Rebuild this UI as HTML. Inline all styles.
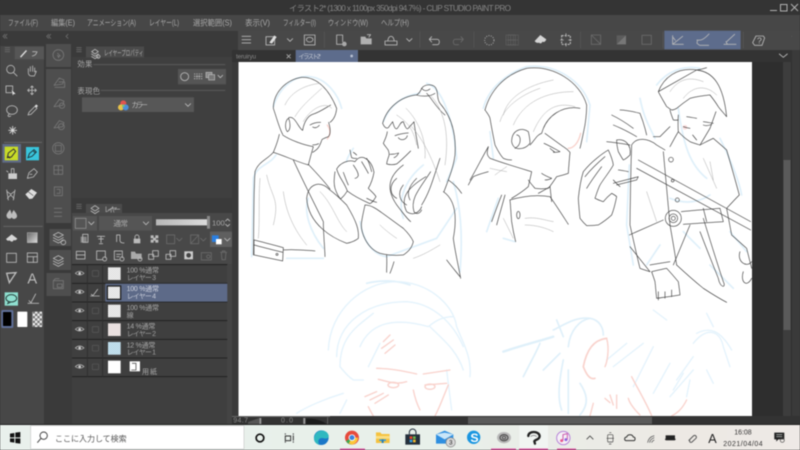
<!DOCTYPE html>
<html lang="ja"><head><meta charset="utf-8"><title>CLIP STUDIO PAINT</title>
<style>
html,body{margin:0;padding:0;background:#333;width:800px;height:450px;overflow:hidden}
svg{display:block;filter:blur(.4px)}
text{font-family:"Liberation Sans","Noto Sans CJK JP",sans-serif}
.m{font-size:8px;fill:#a8a8a8}
.i{fill:none;stroke:#b8b8b8;stroke-width:2.6;stroke-linecap:round;stroke-linejoin:round}
.d{fill:none;stroke:#6a6a6a;stroke-width:2.6;stroke-linecap:round;stroke-linejoin:round}
.s{fill:none;stroke:#767676;stroke-width:2.6;stroke-linejoin:round}
.k{fill:none;stroke:#3a3a3a;stroke-width:1.9;stroke-linecap:round;stroke-linejoin:round}
.g{fill:none;stroke:#a8a8a8;stroke-width:1.4;stroke-linecap:round;stroke-linejoin:round}
.b{fill:none;stroke:#dff0fa;stroke-width:5;stroke-linecap:round;stroke-linejoin:round}
.b2{fill:none;stroke:#e4f3fc;stroke-width:4;stroke-linecap:round;stroke-linejoin:round}
.r{fill:none;stroke:#f9d2cc;stroke-width:4;stroke-linecap:round;stroke-linejoin:round}
</style></head><body>
<svg width="800" height="450" viewBox="0 0 800 450" xmlns="http://www.w3.org/2000/svg">
<defs>
<pattern id="ck" width="6" height="6" patternUnits="userSpaceOnUse"><rect width="6" height="6" fill="#f6f6f6"/><rect width="3" height="3" fill="#d8d8d8"/><rect x="3" y="3" width="3" height="3" fill="#d8d8d8"/></pattern>
<pattern id="ck2" width="4" height="4" patternUnits="userSpaceOnUse"><rect width="4" height="4" fill="#ededed"/><rect width="2" height="2" fill="#888"/><rect x="2" y="2" width="2" height="2" fill="#888"/></pattern>
<pattern id="ck3" width="14" height="14" patternUnits="userSpaceOnUse"><rect width="14" height="14" fill="#ededed"/><rect width="7" height="7" fill="#777"/><rect x="7" y="7" width="7" height="7" fill="#777"/></pattern>
<linearGradient id="op" x1="0" x2="1"><stop offset="0" stop-color="#b5b5b5"/><stop offset="1" stop-color="#eee"/></linearGradient>
<linearGradient id="tb" x1="0" x2="1"><stop offset="0" stop-color="#e9f0ec"/><stop offset=".55" stop-color="#e8f0ea"/><stop offset=".85" stop-color="#ede9e4"/><stop offset="1" stop-color="#eee9e6"/></linearGradient>
<linearGradient id="gr" x1="0" y1="0" x2="1" y2="1"><stop offset="0" stop-color="#666"/><stop offset="1" stop-color="#ddd"/></linearGradient>
</defs>
<rect width="800" height="450" fill="#333"/>
<rect y="0" width="800" height="15" fill="#343434"/>
<rect y="15" width="800" height="16" fill="#474747"/>
<rect y="31" width="800" height="19" fill="#484848"/>
<rect y="31" width="238" height="393" fill="#3a3a3a"/>
<rect y="50" x="232" width="568" height="12" fill="#333"/>
<text x="289" y="11" font-size="8.2" fill="#868686" textLength="222">イラスト2* (1300 x 1100px 350dpi 94.7%)  - CLIP STUDIO PAINT PRO</text>
<g stroke="#b0b0b0" fill="none" stroke-width="1"><path d="M770 10.5h7"/><rect x="780.5" y="4.5" width="6.5" height="6.5"/><path d="M791 4l7 7M798 4l-7 7"/></g>
<text class="m" x="8" y="25.5" textLength="30" lengthAdjust="spacingAndGlyphs">ファイル(F)</text>
<text class="m" x="51" y="25.5" textLength="24" lengthAdjust="spacingAndGlyphs">編集(E)</text>
<text class="m" x="87" y="25.5" textLength="49" lengthAdjust="spacingAndGlyphs">アニメーション(A)</text>
<text class="m" x="149" y="25.5" textLength="30" lengthAdjust="spacingAndGlyphs">レイヤー(L)</text>
<text class="m" x="193" y="25.5" textLength="39" lengthAdjust="spacingAndGlyphs">選択範囲(S)</text>
<text class="m" x="245" y="25.5" textLength="25" lengthAdjust="spacingAndGlyphs">表示(V)</text>
<text class="m" x="283" y="25.5" textLength="33" lengthAdjust="spacingAndGlyphs">フィルター(I)</text>
<text class="m" x="328" y="25.5" textLength="40" lengthAdjust="spacingAndGlyphs">ウィンドウ(W)</text>
<text class="m" x="381" y="25.5" textLength="28" lengthAdjust="spacingAndGlyphs">ヘルプ(H)</text>
<rect x="0" y="46" width="44" height="378" fill="#474747"/>
<rect x="0" y="31" width="44" height="15" fill="#3a3a3a"/>
<rect x="14.7" y="46.7" width="29.3" height="12.6" fill="#565656"/>
<rect x="46" y="31" width="25" height="393" fill="#3a3a3a"/>
<rect x="46" y="44" width="25" height="23" fill="#4e4e4e"/>
<rect x="46" y="69" width="25" height="154" fill="#4e4e4e"/>
<rect x="49.5" y="229" width="21.5" height="17" fill="#4e4e4e"/>
<rect x="49.5" y="250" width="21.5" height="20" fill="#4e4e4e"/>
<rect x="46.5" y="273" width="24.5" height="23" fill="#4e4e4e"/>
<rect x="72" y="57" width="160" height="141" fill="#3f3f3f"/>
<rect x="86" y="46.5" width="58" height="11" fill="#4b4b4b"/>
<rect x="72" y="198" width="160" height="15" fill="#3a3a3a"/>
<rect x="86" y="204" width="36" height="9" fill="#4b4b4b"/>
<rect x="72" y="213" width="160" height="51" fill="#484848"/>
<rect x="72" y="264" width="160" height="160" fill="#3f3f3f"/>
<rect x="227" y="264" width="5" height="160" fill="#444"/>

<g transform="scale(.3333)">
<path d="M15 103l-6 6 6 6M21 103l-6 6 6 6" class="d" stroke-width="2"/>
<path d="M146 103l-6 6 6 6M152 103l-6 6 6 6M204 103l-6 6 6 6" class="d" stroke-width="2"/>
<path d="M15 143h14M15 149h14M15 155h14M230 143h14M230 149h14M230 155h14" class="d" stroke-width="2"/>
<path d="M60 170l18-20 3 3-18 20z" fill="#ddd"/>
<path d="M98 155h10M97 168c8-1 12-5 14-13" class="i" stroke-width="2.5"/>
<text x="312" y="166" font-size="22" fill="#b0b0b0" textLength="118" lengthAdjust="spacingAndGlyphs">レイヤープロパティ</text>
<path d="M275 155l10-7 10 7-10 7zM275 162l10 7 10-7M275 170l10 6 10-6" class="i" stroke-width="2.2"/><circle cx="295" cy="170" r="5" class="i" stroke-width="2"/>
<circle cx="32" cy="208" r="12" class="i"/><path d="M41 218l10 10" class="i"/>
<path d="M85 218v-12M91 214v-14M98 214v-16M104 216v-12M85 220c2 6 5 8 10 8h8l6-14-5 0" class="i" stroke="#ccc" fill="#bbb"/>
<rect x="18" y="258" width="20" height="20" class="i"/><path d="M34 268l14 14-7 1-3 5z" fill="#ddd" stroke="#333"/>
<path d="M96 258v26M83 271h26M96 258l-4 4M96 258l4 4M96 284l-4-4M96 284l4-4M83 271l4-4M83 271l4 4M109 271l-4-4M109 271l-4 4" class="i"/>
<ellipse cx="36" cy="330" rx="16" ry="13" class="i"/><path d="M28 342c-8 6-2 10 4 6" class="i"/>
<path d="M84 345l3-8 18-18 6 6-18 18z" class="i"/><path d="M104 318l5-5 5 5-5 5z" fill="#ddd"/>
<path d="M38 378v26M25 391h26M29 382l18 18M47 382l-18 18" stroke="#c8c8c8" stroke-width="3"/><circle cx="38" cy="391" r="4" fill="#ddd"/>
<circle cx="175" cy="165" r="16" class="s"/><path d="M172 159l9 9h-4l-1 5-4-8" class="s"/>
<path d="M162 256l16-22 14 6-4 12zM176 246h18v16h-30" class="s"/>
<path d="M162 320l16-22 14 6-4 12z" class="s"/><circle cx="186" cy="317" r="8" class="s"/>
<path d="M162 384l16-22 14 6-4 12z" class="s"/><circle cx="184" cy="380" r="9" class="s"/>
<text x="232" y="200" font-size="22" fill="#a8a8a8" textLength="45">効果</text>
<path d="M280 194H676" stroke="#5a5a5a" stroke-width="3"/>
<rect x="534" y="207" width="144" height="46" fill="#555"/>
<circle cx="554" cy="230" r="12" class="i" stroke="#b5b5b5"/>
<g fill="#aaa"><circle cx="584" cy="222" r="2"/><circle cx="591" cy="222" r="2"/><circle cx="598" cy="222" r="2"/><circle cx="605" cy="222" r="2"/><circle cx="584" cy="229" r="2"/><circle cx="591" cy="229" r="3"/><circle cx="598" cy="229" r="3"/><circle cx="605" cy="229" r="2"/><circle cx="584" cy="236" r="2"/><circle cx="591" cy="236" r="2"/><circle cx="598" cy="236" r="2"/><circle cx="605" cy="236" r="2"/></g>
<rect x="618" y="217" width="18" height="16" fill="#888" stroke="#bbb" stroke-width="2"/><rect x="626" y="224" width="18" height="16" fill="#777" stroke="#bbb" stroke-width="2"/>
<path d="M654 226l7 7 7-7" class="i" stroke="#ccc"/>
<text x="232" y="281" font-size="22" fill="#a8a8a8" textLength="68">表現色</text>
<path d="M302 271H676" stroke="#5a5a5a" stroke-width="3"/>
<rect x="246" y="292" width="336" height="44" fill="#575757"/>
<circle cx="370" cy="310" r="9" fill="#e2534f"/><circle cx="363" cy="322" r="9" fill="#e8c24a"/><circle cx="377" cy="322" r="9" fill="#4d8fd8"/><circle cx="370" cy="317" r="4" fill="#7bc07a"/>
<text x="394" y="323" font-size="22" fill="#b8b8b8" textLength="50">カラー</text>
<path d="M556 311l8 8 8-8" class="i" stroke="#ccc"/>
</g>

<g transform="translate(0,135) scale(.3333)">
<path d="M12 22h114" stroke="#666" stroke-width="3"/>
<rect x="7" y="27" width="56" height="56" fill="#5f6b86"/>
<rect x="14" y="35" width="40" height="41" fill="#c8dc27"/>
<path d="M22 68l3-14 16-12 6 7-13 17zM25 64l5 6" fill="none" stroke="#333" stroke-width="3"/>
<rect x="78" y="36" width="39" height="40" fill="#39c5dc"/>
<path d="M84 68l4-12 14-12 7 7-13 13zM100 48l6 6" fill="none" stroke="#1f3d44" stroke-width="3"/>
<rect x="25" y="115" width="26" height="17" fill="#ccc"/><path d="M34 115v-14h8v14M20 108l4 3" class="i"/>
<path d="M82 130l5-17 15-12 10 10-12 15zM90 118l6 0" class="i"/>
<path d="M22 170l10 8 10-8M22 190l10-10 10 10M20 165l5 30M45 165l-5 30" class="i" stroke="#ddd"/>
<path d="M76 178l18-16 17 11-14 18-9 1z" fill="#ddd"/><path d="M84 170l16 12" stroke="#555" stroke-width="2"/>
<path d="M30 224c-8 10-12 14-10 21 3 8 12 8 15 2 3 7 14 6 16-2 1-7-4-12-10-20-3 5-6 10-6 13-1-4-2-9-5-14z" fill="#bdbdbd"/>
<path d="M10 274h118" stroke="#666" stroke-width="3"/>
<path d="M18 312l17-14 17 13c-4 6-9 6-11 4-2 5-5 5-7 5l-6-4c-3 2-6 2-10-4z" fill="#d6d6d6"/>
<rect x="82" y="293" width="30" height="30" fill="url(#gr)" stroke="#bbb" stroke-width="1.5"/>
<rect x="20" y="355" width="29" height="27" class="i"/>
<rect x="82" y="354" width="30" height="28" class="i"/><path d="M82 365h30M100 365v17" class="i"/>
<circle cx="175" cy="40" r="17" class="s"/><rect x="166" y="31" width="18" height="18" class="s"/>
<path d="M162 92h26v26h-26zM175 92v26M162 105h26" class="s"/>
<rect x="163" y="156" width="24" height="26" class="s"/><path d="M170 163h10v12h-10" class="s"/>
<path d="M162 220h24M162 232h24M162 244h24" class="s"/>
<path d="M160 300l15-8 15 8-15 8zM160 308l15 8 15-8M160 316l15 8 15-8" class="i" stroke="#a0a0a0"/><circle cx="190" cy="322" r="7" class="i" stroke="#a0a0a0" stroke-width="2"/>
<path d="M160 370l15-8 15 8-15 8zM160 378l15 8 15-8M160 386l15 8 15-8" class="i" stroke="#a0a0a0"/>
<path d="M230 208h14M230 214h14M230 220h14" class="d" stroke-width="2"/>
<path d="M273 220l12-8 12 8-12 8zM273 228l12 8 12-8" class="i" stroke-width="2.2"/>
<text x="312" y="231" font-size="22" fill="#b0b0b0" textLength="50">レイヤー</text>
<rect x="219" y="243" width="72" height="44" fill="#555"/><rect x="226" y="250" width="32" height="30" fill="none" stroke="#999" stroke-width="2"/><path d="M266 261l8 8 8-8" class="i"/>
<rect x="297" y="243" width="159" height="44" fill="#555"/><text x="340" y="273" font-size="23" fill="#aaa" textLength="44">通常</text><path d="M430 261l8 8 8-8" class="i"/>
<rect x="468" y="253" width="155" height="18" fill="url(#ck2)"/><rect x="468" y="253" width="155" height="18" fill="url(#op)" opacity=".65"/>
<rect x="621" y="243" width="9" height="38" fill="#8a8a8a"/>
<text x="636" y="272" font-size="23" fill="#a8a8a8">100</text><path d="M677 258l6-6 6 6M677 268l6 6 6-6" class="i" stroke-width="2"/>
<rect x="242" y="305" width="18" height="18" fill="#888"/><rect x="248" y="298" width="16" height="24" class="i"/>
<path d="M292 304h22M303 304v18M296 312h14M298 326h10" class="i"/>
<path d="M350 300h10v16c0 6 4 8 12 8M350 300v20" class="i"/>
<rect x="401" y="311" width="20" height="14" fill="#bbb"/><path d="M405 311v-5a6 6 0 0 1 12 0v5" class="i"/>
<g fill="#bbb"><rect x="452" y="301" width="9" height="9"/><rect x="466" y="301" width="9" height="9"/><rect x="452" y="314" width="9" height="9"/><rect x="466" y="314" width="9" height="9"/><rect x="459" y="308" width="9" height="9"/></g>
<rect x="500" y="300" width="24" height="26" class="d"/><path d="M530 310l8 8 8-8" class="d"/>
<path d="M572 300h24v26h-24zM572 326l24-26" class="d"/><path d="M602 310l8 8 8-8" class="d"/>
<rect x="630" y="290" width="68" height="46" fill="#5f5f5f"/>
<rect x="636" y="301" width="20" height="20" fill="#2b7fe0"/><rect x="648" y="312" width="17" height="16" fill="#fff"/><path d="M674 310l8 8 8-8" class="i"/>
<rect x="229" y="349" width="26" height="23" class="i"/><path d="M229 360h26" class="i"/>
<path d="M290 348h26v20M290 348v26h18" class="i"/><circle cx="314" cy="372" r="6" class="i" stroke-width="2"/>
<path d="M343 348h24v20M343 348v26h14M350 358h12M350 365h8" class="i"/><circle cx="366" cy="372" r="6" class="i" stroke-width="2"/>
<path d="M393 350h12l3 6h17v16h-32z" fill="#aaa"/><circle cx="420" cy="372" r="6" class="i" stroke-width="2"/>
<rect x="446" y="358" width="15" height="15" class="i"/><rect x="458" y="347" width="17" height="17" class="i"/>
<rect x="498" y="358" width="15" height="15" class="i"/><rect x="510" y="347" width="17" height="17" class="i"/>
<rect x="553" y="349" width="26" height="24" fill="#ccc"/><circle cx="566" cy="361" r="7" fill="#444"/>
<rect x="604" y="353" width="30" height="22" class="d"/><circle cx="625" cy="365" r="5" class="d"/>
<path d="M662 352h18M667 352v-4h8v4M664 352l2 22h10l2-22" class="d"/>
</g>

<g transform="translate(0,260) scale(.3333)">
<path d="M20 40l28-2-20 30z" fill="none" stroke="#bbb" stroke-width="4"/>
<text x="82" y="70" font-size="44" fill="#bbb">A</text>
<rect x="14" y="97" width="40" height="40" fill="#8fe0d0"/>
<ellipse cx="34" cy="115" rx="16" ry="11" fill="none" stroke="#27413d" stroke-width="3"/><path d="M26 124l-3 7 8-4" fill="none" stroke="#27413d" stroke-width="2.5"/>
<path d="M84 130h32M92 130l15-28M87 122l8 8" class="i"/>
<rect x="4" y="150" width="36" height="54" rx="4" fill="#5f6f98"/><rect x="9" y="156" width="25" height="42" rx="2" fill="#000"/>
<rect x="52" y="155" width="30" height="46" rx="2" fill="#fff"/>
<rect x="97" y="155" width="30" height="46" rx="2" fill="url(#ck3)"/>
<rect x="160" y="62" width="30" height="24" class="s"/><rect x="172" y="72" width="14" height="10" class="s"/><path d="M160 62l6-6h12" class="s"/>
<path d="M216 14H682M216 70H682M216 126H682M216 182H682M216 238H682M216 294H682M216 350H682" stroke="#222" stroke-width="3"/>
<path d="M262 14V350M308 14V350" stroke="#2e2e2e" stroke-width="2.5"/>
<rect x="316" y="71" width="366" height="54" fill="#5d6a88"/>
<g fill="none" stroke="#c0c0c0" stroke-width="2">
<path d="M226 40q13-12 26 0q-13 10-26 0z"/><path d="M226 96q13-12 26 0q-13 10-26 0z"/><path d="M226 152q13-12 26 0q-13 10-26 0z"/><path d="M226 208q13-12 26 0q-13 10-26 0z"/><path d="M226 264q13-12 26 0q-13 10-26 0z"/><path d="M226 320q13-12 26 0q-13 10-26 0z"/>
</g>
<g fill="#d0d0d0"><circle cx="239" cy="40" r="4"/><circle cx="239" cy="96" r="4"/><circle cx="239" cy="152" r="4"/><circle cx="239" cy="208" r="4"/><circle cx="239" cy="264" r="4"/><circle cx="239" cy="320" r="4"/></g>
<g fill="none" stroke="#565656" stroke-width="2.5"><rect x="277" y="32" width="19" height="17" rx="2"/><rect x="277" y="144" width="19" height="17" rx="2"/><rect x="277" y="200" width="19" height="17" rx="2"/><rect x="277" y="256" width="19" height="17" rx="2"/><rect x="277" y="312" width="19" height="17" rx="2"/></g>
<path d="M272 108h26M278 108l15-20M274 103l6 5" class="i" stroke-width="2.5"/>
<rect x="324" y="22" width="38" height="38" fill="url(#ck)"/>
<rect x="320" y="76" width="44" height="44" fill="#222"/><rect x="324" y="80" width="36" height="36" fill="url(#ck)"/>
<rect x="324" y="134" width="38" height="38" fill="url(#ck)"/>
<rect x="324" y="190" width="38" height="38" fill="url(#ck)"/><rect x="324" y="190" width="38" height="38" fill="#f3c9c4" opacity=".22"/>
<rect x="324" y="246" width="38" height="38" fill="url(#ck)"/><rect x="324" y="246" width="38" height="38" fill="#8fd0f0" opacity=".45"/>
<rect x="324" y="302" width="38" height="38" fill="#fff"/>
<text x="380" y="38" fill="#a8a8a8" font-size="21" textLength="97">100 %通常</text><text x="380" y="60" font-size="21" fill="#9e9e9e" textLength="88">レイヤー 3</text>
<text x="380" y="93" font-size="21" fill="#cfd3de" textLength="97">100 %通常</text><text x="380" y="115" font-size="21" fill="#c6cbd8" textLength="88">レイヤー 4</text>
<text x="380" y="150" font-size="21" fill="#a8a8a8" textLength="97">100 %通常</text><text x="380" y="172" font-size="21" fill="#9e9e9e">線</text>
<text x="380" y="206" font-size="21" fill="#a8a8a8" textLength="86">14 %通常</text><text x="380" y="228" font-size="21" fill="#9e9e9e" textLength="88">レイヤー 2</text>
<text x="380" y="262" font-size="21" fill="#a8a8a8" textLength="86">12 %通常</text><text x="380" y="284" font-size="21" fill="#9e9e9e" textLength="88">レイヤー 1</text>
<text x="426" y="342" font-size="21" fill="#a8a8a8" textLength="45">用紙</text>
<rect x="389" y="304" width="31" height="30" fill="#fff"/><path d="M396 310h12v20h-14" fill="none" stroke="#555" stroke-width="2.5"/>
</g>

<g transform="translate(230,0) scale(.3333)">
<path d="M36 109h26M36 119h26M36 129h26" class="i" stroke-width="3.5"/>
<rect x="108" y="110" width="26" height="25" class="i" stroke="#aaa"/><path d="M118 128l15-22 7 5-14 20z" fill="#ddd"/>
<path d="M172 116l8 8 8-8" class="i" stroke="#aaa"/>
<rect x="223" y="105" width="32" height="30" class="i"/><ellipse cx="239" cy="119" rx="10" ry="7" class="i"/>
<path d="M283 95V143M570 95V143M732 95V143" stroke="#595959" stroke-width="2"/>
<path d="M320 105h18v20M320 105v28h15" class="i"/><circle cx="343" cy="132" r="7" fill="#aaa"/>
<path d="M392 110h14l3 5h16v18h-33z" fill="#b0b0b0"/><path d="M412 104l10 0-5 7" class="i" stroke-width="2"/>
<path d="M465 135v-12h36v12zM473 123c2-7 3-14 10-14s8 7 10 14" class="i"/>
<path d="M530 116l8 8 8-8" class="i"/>
<path d="M598 118h24c8 0 8 16 0 16h-14M598 118l7-8M598 118l7 8" class="i"/>
<path d="M700 118h-24c-8 0-8 16 0 16h10M700 118l-7-8M700 118l-7 8" class="d"/>
<circle cx="778" cy="121" r="14" fill="none" stroke="#aaa" stroke-width="3" stroke-dasharray="3 4"/>
<path d="M835 105h30v30h-30zM835 120h30M850 105v30" class="d" opacity=".55"/>
<text x="18" y="176" font-size="19" fill="#868686" textLength="60">teruiryu</text>
<path d="M170 163l12 12M182 163l-12 12" stroke="#aaa" stroke-width="2.5"/>
<rect x="197" y="150" width="187" height="36" fill="#5d6c8c"/>
<text x="205" y="176" font-size="19" fill="#c0c5d0" textLength="68">イラスト2*</text>
<circle cx="365" cy="168" r="4" fill="#b9c2d3"/>
</g>
<g transform="translate(510,0) scale(.3333)">
<path d="M212 95V145" stroke="#595959" stroke-width="2"/>
<path d="M700 95V145M459 95V145" stroke="#595959" stroke-width="2"/>
<rect x="463" y="92" width="229" height="56" fill="#5d6c8c"/>
<path d="M74 123l17-18 18 13c-4 10-10 8-12 7-2 7-8 6-10 3-5 2-10 0-13-5z" fill="#d4d4d4"/>
<rect x="155" y="107" width="26" height="26" fill="none" stroke="#c4c4c4" stroke-width="3" stroke-dasharray="6 3"/><path d="M168 101v8M152 120h8M176 120h8M168 130v8" class="i" stroke-width="2"/>
<path d="M-12 105h28v30h-28zM-12 120h28M2 105v30" class="d" opacity=".55"/>
<path d="M244 105h28v28h-28zM244 105l28 28" class="d" stroke="#5e5e5e"/>
<rect x="320" y="106" width="28" height="27" fill="#5c5c5c"/><path d="M348 106v27h-28z" fill="#777"/>
<rect x="396" y="106" width="28" height="27" class="d" stroke="#626262"/>
<path d="M488 107v26h32M488 133l30-24M490 113l6 8" class="i" stroke="#bcc5d8"/>
<path d="M561 130c2-8 0-10 0-10 12 3 22-3 36-18M561 130l8 6h27" class="i" stroke="#bcc5d8"/>
<path d="M642 133h36M648 125l4 8M650 125l24-22" class="i" stroke="#bcc5d8"/>
<path d="M738 108h22l4 6-8 22h-22l-6-8z" class="i"/><text x="741" y="130" font-size="26" fill="#bbb">?</text>
<path d="M852 103l-6 6 6 6M860 103l-6 6 6 6" class="d" stroke-width="2"/>
<path d="M808 162l12 10 12-10" class="i" stroke="#ccc"/>
</g>

<rect x="232" y="62" width="560" height="354" fill="#2e2e2e"/>
<rect x="232" y="62" width="6.5" height="362" fill="#3a3a3a"/>
<rect x="238.5" y="62" width="513.5" height="354" fill="#fff"/>
<rect x="783" y="62" width="8" height="354" fill="#3d3d3d"/>
<rect x="783.5" y="160" width="7" height="170" fill="#5a5a5a"/>
<rect x="792" y="31" width="8" height="393" fill="#3a3a3a"/>
<rect x="792" y="31" width="8" height="19" fill="#484848"/>

<!-- left couple -->
<g transform="translate(240,65) scale(.3333)">
<g class="b">
<path d="M100 125C120 60 170 30 210 35C260 40 295 90 305 130"/>
<path d="M108 270C90 300 50 300 40 340L35 575"/>
<path d="M140 580H250"/>
<path d="M205 400C190 440 210 500 250 550"/>
<path d="M560 55C610 70 640 170 650 280L620 350"/>
<path d="M430 170C450 120 490 90 540 85"/>
<path d="M360 470C370 530 400 570 440 575L590 520L650 430"/>
<path d="M550 300C500 340 470 400 490 460"/>
<path d="M380 655C420 645 470 645 510 660"/>
<path d="M340 250C330 265 320 280 320 290"/>
<path d="M640 350C660 420 670 500 660 620"/>
</g>
<path class="r" stroke-width="2.5" d="M262 180C272 195 272 210 262 222"/>
<g class="k">
<path d="M128 208C118 190 112 165 100 130C100 85 135 45 185 37C232 35 268 75 290 130C288 150 280 165 270 172"/>
<path d="M146 160C135 165 134 190 142 200C152 196 152 175 146 160Z"/>
<path d="M146 158C165 150 175 190 188 196C192 170 205 152 218 148C238 142 258 128 272 120"/>
<path d="M266 172C272 192 272 208 265 215C258 218 250 220 246 224C241 235 240 250 218 262"/>
<path d="M210 180C220 174 232 172 242 172M218 186C226 191 232 188 238 181"/>
<path d="M218 240C225 240 232 238 236 236"/>
<path d="M118 208C112 235 105 250 100 262C140 275 170 290 205 300C210 280 215 262 220 245C190 240 150 225 128 210"/>
<path d="M100 262C80 285 55 290 45 320C40 400 42 500 40 570"/>
<path d="M205 298C225 320 250 345 270 372"/>
<path d="M160 285C185 340 225 420 250 470C250 505 254 540 255 575"/>
<path d="M42 525C70 532 100 540 130 548L128 588C100 582 70 576 42 570Z"/>
<path d="M42 540C70 548 100 555 128 562"/><circle cx="111" cy="568" r="3"/>
<path d="M130 555C165 552 195 556 225 558"/>
<path d="M200 400C205 355 240 345 270 375C290 390 305 405 320 420C335 445 345 465 350 480C355 495 356 510 355 520C345 528 335 532 320 535C280 520 205 480 200 400Z"/>
<path d="M290 312C300 295 325 282 345 290C352 280 362 275 372 278C388 285 398 300 402 322C398 345 392 358 385 370C392 378 402 385 408 395C402 405 398 412 390 416C365 405 340 392 322 378C312 350 298 340 290 312Z"/>
<path d="M285 320C282 340 282 360 285 370C290 385 295 395 302 402C310 395 316 388 322 378"/>
<path d="M310 322C315 335 320 350 325 360M340 300C348 312 355 322 355 332C352 338 348 340 345 340M365 290C372 302 380 315 385 325M380 280C388 292 392 308 395 320"/>
<path d="M330 255C332 265 333 272 335 278C340 280 346 281 350 280M350 270C347 267 343 264 340 262"/>
<path d="M545 70C555 55 585 55 590 75C595 90 590 100 600 115C630 150 650 200 645 270C640 310 625 345 612 380"/>
<path d="M530 90C545 95 570 95 585 85M560 85C575 100 590 130 615 150M545 70C552 78 560 80 570 72"/>
<path d="M428 175C440 130 480 95 530 90C538 84 542 78 545 70"/>
<path d="M428 175C432 185 438 192 445 188C450 180 455 175 458 170C462 185 466 195 472 190C480 180 482 170 490 170C495 185 500 195 505 190C512 180 520 175 522 170C525 195 530 220 535 250"/>
<path d="M442 200C440 215 434 225 430 235C436 245 442 250 445 256C447 262 448 268 447 272C444 280 441 288 440 297C450 300 460 300 470 297C485 285 500 270 512 258"/>
<path d="M450 268C460 268 470 266 476 264C472 272 468 276 462 278M465 212C478 207 492 205 505 204M475 218C485 230 500 222 502 212"/>
<path d="M490 300C450 330 430 370 478 430C490 445 500 460 512 470"/>
<path d="M558 335C500 370 480 400 500 440C520 455 540 440 545 425"/>
<path d="M572 320C540 370 510 400 522 440C530 450 540 445 545 435M600 280C580 340 570 380 545 420"/>
<path d="M470 340C445 360 450 390 470 400M490 360C470 385 480 410 500 420M530 340C505 365 500 385 510 405"/>
<path d="M610 380C640 400 655 440 640 520C645 560 655 600 662 640"/>
<path d="M375 420C400 420 420 440 490 490C505 505 515 518 520 530C515 550 505 560 490 570C465 572 440 570 420 565C380 550 360 500 365 470C368 450 372 435 375 420Z"/>
<path d="M380 400C390 405 400 410 410 412M440 570C441 590 440 605 440 622M462 590C458 605 454 615 450 625M625 345C640 355 655 370 665 385M620 585C635 605 648 620 660 635"/>
</g>
<g class="g">
<path d="M165 155C185 120 230 85 245 70M190 170C215 125 260 110 275 130M135 120C150 85 190 60 240 55M100 480C120 400 95 400 80 330M130 380C135 420 150 480 200 540M240 380C280 420 290 470 320 500M420 480C435 495 455 510 470 520M520 580C550 570 575 555 600 540M510 180C560 230 590 320 600 350M570 90C610 130 630 200 615 300"/>
<path d="M498 130C530 160 560 220 555 280M470 150C500 170 520 190 530 240M60 340C55 400 60 470 55 520"/>
</g>
<path class="k" d="M685 360C690 350 695 342 700 335C715 328 730 324 745 320"/>
</g>

<!-- right figures -->
<g transform="translate(470,65) scale(.3333)">
<g class="b">
<path d="M40 130C55 70 110 25 170 5C255 -5 335 45 360 120L350 230"/>
<path d="M60 200L70 280M85 400L50 500M100 520L135 530"/>
<path d="M510 100C520 150 530 170 555 220"/>
<path d="M560 60C590 20 640 0 690 10"/>
<path d="M750 220C790 300 810 360 815 390M478 300L470 480L490 600"/>
<path d="M600 400C650 420 690 410 720 390M640 500L690 550M720 600L790 670M780 500L830 560"/>
<path d="M625 130C640 240 660 300 710 340M570 540L530 600"/>
</g>
<path class="r" stroke-width="2.5" d="M295 250C310 250 325 235 332 205"/>
<circle cx="645" cy="187" r="7" fill="#fadede"/>
<g class="k">
<path d="M45 135C60 80 100 30 170 10C250 0 330 50 350 120C350 140 348 160 345 180C340 205 335 230 330 250"/>
<path d="M45 135C52 145 58 152 60 160C65 190 70 215 75 240C85 260 92 272 100 280C108 284 116 285 125 285"/>
<path d="M125 230C125 195 155 185 175 200C178 212 180 224 180 235C165 255 130 260 125 230Z"/>
<path d="M140 210C155 210 155 240 135 250"/>
<path d="M180 240C195 225 200 210 215 205C230 150 280 120 330 130"/>
<path d="M225 205C245 220 262 232 280 245C288 250 295 256 300 262C298 285 296 305 295 325C282 330 270 332 260 335C250 350 243 360 235 370C222 372 208 372 195 370C188 362 180 353 175 345"/>
<path d="M222 235C240 243 255 252 270 260C263 262 256 262 250 262M240 250C245 255 250 258 255 262"/>
<path d="M215 325C225 332 235 336 245 340C238 344 232 345 225 345"/>
<path d="M55 245C50 265 50 270 60 280C100 295 145 308 185 320C182 335 178 350 175 365C160 378 142 390 125 400"/>
<path d="M55 245C35 280 18 315 0 345M95 390C85 415 75 442 65 470M105 390C97 420 88 450 80 480"/>
<path d="M120 405C122 425 123 448 125 470C128 490 132 510 137 530"/>
<path d="M120 405C170 390 210 390 240 395C258 420 277 450 295 478"/>
<path d="M205 385C218 378 230 372 240 365C242 380 243 395 245 410"/>
<ellipse cx="145" cy="450" rx="5" ry="11"/>
<path d="M325 400C328 372 332 345 340 320C352 305 365 292 380 280C392 270 403 262 415 255C422 270 428 285 430 300C418 322 402 340 390 360C384 372 380 385 375 400C384 404 392 408 400 410C408 400 416 392 425 385C430 388 436 391 440 395C436 415 432 432 425 450C412 462 398 472 385 480C372 482 360 482 350 482C342 475 336 468 330 460C328 440 326 420 325 400Z"/>
<path d="M350 370C365 345 380 325 395 305M345 335C365 310 385 292 405 275"/>
<path d="M410 230C435 232 458 236 480 240M425 150C450 162 470 175 490 190M430 180C455 190 478 202 500 215M450 135C470 136 490 140 510 145C518 165 525 188 530 210"/>
<path d="M440 225C465 220 485 240 480 270C474 276 467 282 460 285C454 277 450 268 445 260C442 248 440 235 440 225Z"/>
<path d="M430 355C455 348 480 342 505 335L500 345C480 350 460 355 440 360M445 315C455 316 465 318 475 320M430 345C436 352 443 359 450 365"/>
<path d="M565 80C580 40 620 5 680 15C690 14 700 11 710 8M680 15C730 20 760 60 770 155C762 145 752 135 745 125C737 112 728 100 720 90C700 92 680 95 660 100C645 110 632 120 620 130C615 133 610 135 605 135C600 132 595 128 590 125C582 110 572 95 565 80Z"/>
<path d="M600 135C602 145 606 155 610 165C615 166 620 166 625 165"/>
<path d="M625 150C624 167 624 184 625 200C636 212 648 222 660 230C670 234 680 237 690 240C700 224 710 207 720 190C726 174 732 157 738 140"/>
<path d="M650 155C660 156 670 158 680 160M700 170C710 171 720 173 730 175M660 190C653 189 646 187 640 185M700 180C710 185 720 180 725 178M668 210C672 215 676 220 680 225"/>
<path d="M600 185C590 195 580 205 570 215C563 215 556 215 550 215M625 200C616 215 608 230 600 245M690 240C704 233 717 226 730 220C744 232 757 243 770 255C783 300 796 345 808 390C795 403 782 417 770 430C775 457 780 483 785 510C800 523 815 537 830 550C835 570 840 590 845 610"/>
<path d="M505 285L842 470M500 310L842 495"/>
<path d="M485 240C500 215 535 220 560 240C568 245 577 250 585 255M485 240C482 320 481 400 480 480C490 525 500 570 510 610C520 614 530 617 540 620"/>
<path d="M580 260C587 335 594 410 600 480C607 520 614 560 620 600"/>
<circle cx="603" cy="284" r="7"/><circle cx="608" cy="347" r="4"/><circle cx="622" cy="405" r="6"/>
<circle cx="610" cy="460" r="24"/><circle cx="610" cy="460" r="13"/><circle cx="610" cy="460" r="6"/>
<path d="M634 440C672 436 712 433 750 430L760 470C720 473 680 475 640 478M700 430C703 443 707 457 710 470"/>
<path d="M545 620C560 617 575 613 590 610C602 623 614 637 625 650C627 663 629 677 630 690C607 694 583 697 560 700C558 683 557 667 555 650C552 640 548 630 545 620Z"/>
<path d="M565 680V705M585 680V700M605 675V695"/>
<path d="M620 600C647 625 673 648 700 670C723 685 747 700 770 712"/>
<path d="M478 510C512 495 546 480 580 465M480 545C500 570 520 595 540 620M540 600C560 596 580 593 600 590"/>
<path d="M700 460C720 525 740 590 760 650C770 670 750 670 745 640C727 595 708 547 690 500"/>
<path d="M810 560C800 590 830 610 845 590M820 620C810 650 830 670 845 640"/>
<path d="M660 480C643 520 627 560 610 600"/>
</g>
<g class="g">
<path d="M100 150C110 100 170 60 250 45M130 180C160 110 230 80 310 80M190 200C220 130 260 110 315 125M60 310C72 313 98 318 110 320M165 460C200 455 220 465 250 470M165 480C200 480 230 490 250 500M100 460C110 480 120 500 130 520M75 330C88 320 100 312 110 305"/>
<path d="M90 170C100 130 150 90 210 70M600 80C620 50 650 30 700 50M640 100C670 60 710 60 740 90M530 380C540 410 550 440 560 470M720 290L730 345M700 280L740 370"/>
</g>
</g>

<!-- pale sketch -->
<g transform="translate(240,270) scale(.3333)">
<g class="b2">
<path d="M265 240C270 120 370 35 470 35C560 35 640 100 650 170C670 220 695 260 690 320"/>
<path d="M290 260C290 160 380 95 500 95C580 100 640 160 670 230"/>
<path d="M360 230C390 160 460 140 565 170C590 150 610 140 640 140"/>
<path d="M570 170C610 210 650 240 670 300"/>
<path d="M400 130C350 170 300 200 300 290C312 305 325 320 340 330L370 330"/>
<path d="M310 370C260 385 200 410 170 430M320 390L300 430"/>
<path d="M620 300L635 420"/>
<path d="M420 220C400 260 390 280 385 290"/>
</g>
<g class="b" stroke="#d3e9f8">
<path d="M790 245C850 225 910 210 940 200" stroke-width="7"/>
<path d="M850 320C870 280 890 245 900 220M910 300L960 250M950 150L970 200"/>
<path d="M940 180C980 160 1010 140 1050 145C1080 150 1090 175 1090 195"/>
<path d="M985 230C990 180 1020 150 1050 145"/>
<path d="M970 270C960 320 950 380 965 420M985 300L985 430"/>
<path d="M1020 340C1040 370 1050 400 1020 435"/>
</g>
<g class="b2">
<path d="M1100 270L1160 220M1120 290L1210 220M1180 350L1240 230M1240 370L1290 280M1290 380L1360 300M1300 360L1330 310"/>
<path d="M1360 220C1400 170 1440 180 1450 230L1470 290M1370 190C1410 170 1440 180 1475 240M1400 300L1420 340M1350 330L1340 380"/>
<path d="M1240 120L1280 150M1400 130L1420 170M1310 330L1360 260"/>
</g>
<g class="r">
<path d="M1100 205C1060 210 1040 240 1030 290C1040 315 1050 330 1065 325" stroke-width="5"/>
<path d="M1100 205C1110 240 1100 280 1095 290"/>
<path d="M410 295C450 295 500 305 530 312M550 312L630 300"/>
<path d="M415 328C445 335 470 345 500 335M555 345L620 340"/>
<ellipse cx="460" cy="345" rx="16" ry="8"/><ellipse cx="570" cy="350" rx="15" ry="8"/>
<path d="M430 215L450 195M425 235L460 210M435 250L465 225"/>
<path d="M375 380L410 365M390 390L430 370M405 400L445 375"/>
<path d="M520 360C525 385 530 400 540 420M625 345C610 380 600 410 585 438M385 410C390 420 395 430 400 438"/>
<path d="M1060 400L1050 438M1095 385L1110 398M1110 375L1120 405M1130 375L1130 415"/>
<path d="M1175 320C1190 350 1220 400 1235 437M1165 385C1170 405 1190 425 1200 435M1340 390C1325 420 1310 430 1295 438"/>
</g>
</g>

<rect x="232" y="416" width="568" height="8" fill="#333"/>
<rect x="468" y="417" width="184" height="7" fill="#5a5a5a"/>
<rect x="232" y="416" width="98" height="1" fill="#6a6a6a"/>
<g transform="translate(0,400) scale(.3333)">
<text x="700" y="68" font-size="21" fill="#8a8a8a" textLength="44">94.7</text>
<rect x="778" y="54" width="6" height="18" fill="#9a9a9a"/>
<path d="M744 66L778 54V72H744Z" fill="#555"/>
<text x="843" y="68" font-size="21" fill="#8a8a8a" textLength="36">0.0</text>
<rect x="910" y="54" width="6" height="18" fill="#9a9a9a"/>
<path d="M918 72V56C950 54 970 65 980 72Z" fill="#1c1c1c"/>
<path d="M983 52V72" stroke="#777" stroke-width="2"/>
</g>

<rect x="0" y="424" width="800" height="26" fill="url(#tb)"/>
<rect x="0" y="424" width="800" height="1" fill="#222"/>
<g transform="translate(0,400) scale(.3333)">
<g fill="#111"><path d="M30 101l13-2v13H30zM46 98l15-2v16H46zM30 115h13v13l-13-2zM46 115h15v16l-15-2z"/></g>
<rect x="92" y="77" width="640" height="70" fill="#fff" stroke="#c9c9c9" stroke-width="2"/>
<circle cx="131" cy="107" r="11" fill="none" stroke="#444" stroke-width="3"/><path d="M123 115l-11 13" stroke="#444" stroke-width="3"/>
<text x="165" y="125" font-size="24" fill="#555" textLength="215">ここに入力して検索</text>
<circle cx="780" cy="114" r="11.5" fill="none" stroke="#111" stroke-width="5"/>
<path d="M856 100v4M880 100v4M856 124v4M880 124v4M880 106v16" stroke="#333" stroke-width="3" fill="none"/><rect x="856" y="108" width="16" height="14" fill="none" stroke="#333" stroke-width="3"/>
<circle cx="964" cy="113" r="22" fill="#1a78c8"/>
<path d="M944 108c6-20 36-22 42-2 2 8-6 11-14 9-12-3-22 4-14 20-16-6-18-17-14-27z" fill="#2fb8c0"/>
<path d="M966 133c-8-2-12-10-8-16 4-4 14-2 26 2-2 8-10 15-18 14z" fill="#1a78c8"/>
<circle cx="1056" cy="113" r="21" fill="#e64a3c"/>
<path d="M1056 113l-18 10a21 21 0 0 0 18 11z" fill="#3ea854"/><path d="M1056 113l18 0a21 21 0 0 1-18 21l-10-3z" fill="#fbc53a"/>
<circle cx="1056" cy="113" r="10" fill="#fff"/><circle cx="1056" cy="113" r="7.5" fill="#3c82dd"/>
<path d="M1128 97h13l4 5h24v27h-41z" fill="#f5c23f"/><rect x="1128" y="108" width="41" height="8" fill="#fadf84"/><rect x="1138" y="118" width="20" height="5" fill="#3aa0d9"/><rect x="1145" y="118" width="6" height="11" fill="#2b7fb5"/>
</g>
<g transform="translate(400,400) scale(.3333)">
<rect x="16" y="103" width="44" height="31" fill="#24303c"/><path d="M28 103v-6a10 10 0 0 1 20 0v6" fill="none" stroke="#24303c" stroke-width="3"/>
<rect x="29" y="109" width="8" height="8" fill="#e8492e"/><rect x="39" y="109" width="8" height="8" fill="#6bb84a"/><rect x="29" y="119" width="8" height="8" fill="#39a0e0"/><rect x="39" y="119" width="8" height="8" fill="#f3b92d"/>
<path d="M108 103l26-11 26 11v28h-52z" fill="#2f8fe0"/><path d="M108 103l26 15 26-15-26-5z" fill="#c9e6f8"/>
<circle cx="152" cy="127" r="14" fill="#d7d7d7" stroke="#888" stroke-width="2"/><text x="147" y="134" font-size="19" fill="#222">3</text>
<circle cx="221" cy="112" r="20" fill="#1a96e0"/><text x="211" y="126" font-size="37" font-weight="700" fill="#fff">S</text>
<ellipse cx="312" cy="113" rx="21" ry="17" fill="#b9b9b9"/><ellipse cx="312" cy="113" rx="12" ry="9" fill="none" stroke="#555" stroke-width="4"/><ellipse cx="312" cy="113" rx="5" ry="4" fill="none" stroke="#555" stroke-width="3"/>
<rect x="358" y="76" width="86" height="74" fill="#f1f5f2"/>
<path d="M385 108c0-16 32-16 34 0 0 12-14 10-16 16l2 7" fill="none" stroke="#222" stroke-width="7" stroke-linecap="round"/><path d="M392 110c4-5 15-5 18 0" stroke="#888" stroke-width="2.5" fill="none"/>
<circle cx="490" cy="114" r="20" fill="#f5f0f6" stroke="#b884d8" stroke-width="3"/><circle cx="485" cy="122" r="4.5" fill="#ea5a8e"/><circle cx="498" cy="119" r="4.5" fill="#8a67e0"/><path d="M489 122V104l13-3v18" fill="none" stroke="#cc5cae" stroke-width="3"/>
<path d="M560 118l10-10 10 10" fill="none" stroke="#444" stroke-width="2.5"/>
<rect x="623" y="104" width="16" height="22" rx="2" fill="none" stroke="#444" stroke-width="2"/><path d="M628 98h6M627 132h7M620 115h22" stroke="#444" stroke-width="2"/>
<path d="M680 122c-8 0-8-10 0-11 3-9 17-9 20 0 7 0 7 11 0 11z" fill="none" stroke="#333" stroke-width="3"/>
<path d="M743 128c2-12 8-18 20-21M749 128c1-8 6-12 14-15M755 128c1-4 4-6 8-8" fill="none" stroke="#666" stroke-width="2.5"/>
<rect x="797" y="106" width="28" height="15" fill="#222"/><path d="M795 118h32" stroke="#222" stroke-width="3"/>
<path d="M866 122l14-14a5 5 0 0 1 8 7l-12 11a4 4 0 0 1-6-6" fill="none" stroke="#555" stroke-width="3"/>
<text x="925" y="129" font-size="38" fill="#222">A</text>
<text x="1029" y="103" font-size="21" fill="#333" text-anchor="middle">16:08</text>
<text x="1029" y="138" font-size="21" fill="#333" text-anchor="middle" textLength="118">2021/04/04</text>
<path d="M1123 98h30v20h-18l-6 7v-7h-6z" fill="#222"/><path d="M1129 104h18M1129 110h18" stroke="#dfe5e2" stroke-width="2"/><circle cx="1147" cy="121" r="6" fill="none" stroke="#444" stroke-width="2"/>
</g>
<g fill="#d957a0">
<rect x="340" y="448.5" width="25" height="1.5"/>
<rect x="491" y="448.5" width="25" height="1.5"/>
<rect x="519" y="448.5" width="29" height="1.5"/>
<rect x="557" y="448.5" width="19" height="1.5"/>
</g>
</svg>
</body></html>
